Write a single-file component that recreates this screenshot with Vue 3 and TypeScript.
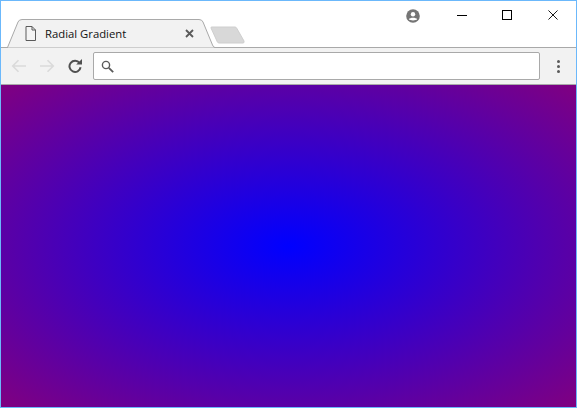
<script setup lang="ts">
const title: string = 'Radial Gradient'
</script>

<template>
  <div class="window">
    <header class="titlebar">
      <div class="tabs">
        <div class="tab">
          <svg class="tab-shape" width="207" height="29" viewBox="0 0 207 29">
            <path d="M0 28.5 H0.5 L11 3 Q12 0.5 15 0.5 H192 Q195 0.5 196 3 L205.5 26 Q206.5 28.5 208 28.5" fill="#f2f2f2" stroke="#a9a9a9" stroke-width="1" />
          </svg>
          <svg class="page-icon" width="12" height="15" viewBox="0 0 12 15">
            <path d="M1 0.5 H7 L10.5 4 V14.5 H1 Z M7 0.5 V4 H10.5" fill="#f4f4f4" stroke="#5a5a5a" stroke-width="1" />
          </svg>
          <span class="tab-title">{{ title }}</span>
          <svg class="tab-close" width="9" height="9" viewBox="0 0 9 9">
            <path d="M1 1 L8 8 M8 1 L1 8" stroke="#5a5a5a" stroke-width="1.8" />
          </svg>
        </div>
        <svg class="new-tab" width="35" height="18" viewBox="0 0 35 18">
          <path d="M1 2 Q0.5 1 2 1 H25 Q26 1 26.6 2 L34 15 Q34.6 17 33 17 H9 Q8 17 7.4 16 Z" fill="#d8d8d8" stroke="#cecece" stroke-width="1" />
        </svg>
      </div>
      <div class="captions">
        <svg class="profile" width="14" height="14" viewBox="0 0 14 14">
          <circle cx="7" cy="7" r="6.8" fill="#757575" />
          <circle cx="7" cy="5.2" r="2.2" fill="#fff" />
          <path d="M2.8 10.3 C4 8.3 10 8.3 11.2 10.3 C10 11.8 4 11.8 2.8 10.3 Z" fill="#fff" />
        </svg>
        <svg class="cap-min" width="10" height="10" viewBox="0 0 10 10">
          <path d="M0 5.5 H10" stroke="#000" stroke-width="1" />
        </svg>
        <svg class="cap-max" width="10" height="10" viewBox="0 0 10 10">
          <rect x="0.5" y="0.5" width="9" height="9" fill="none" stroke="#000" stroke-width="1" />
        </svg>
        <svg class="cap-close" width="10" height="10" viewBox="0 0 11 11">
          <path d="M0.5 0.5 L10.5 10.5 M10.5 0.5 L0.5 10.5" stroke="#000" stroke-width="1" />
        </svg>
      </div>
    </header>
    <nav class="toolbar">
      <svg class="nav-icon" width="16" height="14" viewBox="0 0 16 14">
        <path d="M15 7 H2 M7.5 1.2 L1.7 7 L7.5 12.8" fill="none" stroke="#dadada" stroke-width="1.6" />
      </svg>
      <svg class="nav-icon forward" width="16" height="14" viewBox="0 0 16 14">
        <path d="M1 7 H14 M8.5 1.2 L14.3 7 L8.5 12.8" fill="none" stroke="#dadada" stroke-width="1.6" />
      </svg>
      <svg class="reload" width="14" height="14" viewBox="0 0 14 14">
        <path d="M11.6 4 A5.6 5.6 0 1 0 12.6 8.3" fill="none" stroke="#505050" stroke-width="2" />
        <path d="M8.2 5.4 H14 V0 Z" fill="#505050" />
      </svg>
      <div class="omnibox">
        <svg width="13" height="13" viewBox="0 0 13 13">
          <circle cx="5" cy="5" r="3.6" fill="none" stroke="#5a5a5a" stroke-width="1.4" />
          <path d="M7.8 7.8 L12.2 12.2" stroke="#5a5a5a" stroke-width="1.8" />
        </svg>
      </div>
      <div class="menu">
        <span class="dot"></span>
        <span class="dot"></span>
        <span class="dot"></span>
      </div>
    </nav>
    <main class="viewport"></main>
  </div>
</template>

<style>
html, body { margin: 0; padding: 0; }
</style>

<style scoped>
.window {
  box-sizing: border-box;
  width: 577px;
  height: 408px;
  border: 1px solid #6bb8fb;
  display: flex;
  flex-direction: column;
  background: #fff;
  overflow: hidden;
}
.titlebar {
  height: 47px;
  flex: none;
  display: flex;
  justify-content: space-between;
  box-sizing: border-box;
  border-bottom: 1px solid #a9a9a9;
}
.tabs {
  display: flex;
  align-items: flex-start;
  padding: 18px 0 0 6px;
}
.tab {
  position: relative;
  width: 199px;
  height: 29px;
  display: flex;
  align-items: center;
  box-sizing: border-box;
  padding: 0 0 0 18px;
}
.tab-shape {
  position: absolute;
  left: 0;
  top: 0;
  overflow: visible;
}
.page-icon, .tab-title, .tab-close { position: relative; }
.tab-title {
  margin-left: 8px;
  font: 11.3px/16px "Open Sans", "Noto Sans", sans-serif;
  color: #111;
  width: 140px;
  white-space: nowrap;
}
.new-tab {
  margin: 7px 0 0 4px;
  flex: none;
}
.captions {
  display: flex;
  align-items: flex-start;
  padding: 9px 18px 0 0;
}
.profile { margin: -1px 37px 0 0; }
.cap-min { margin: 0 35px 0 0; }
.cap-max { margin: 0 36px 0 0; }
.toolbar {
  height: 37px;
  flex: none;
  box-sizing: border-box;
  background: #f2f2f2;
  border-bottom: 1px solid #a9a9a9;
  display: flex;
  align-items: center;
  padding: 0 16px 0 10px;
}
.forward { margin-left: 12px; }
.reload { margin-left: 13px; }
.omnibox {
  flex: 1;
  height: 28px;
  margin-left: 11px;
  box-sizing: border-box;
  background: #fff;
  border: 1px solid #a9a9a9;
  border-radius: 2px;
  display: flex;
  align-items: center;
  padding-left: 7px;
}
.menu {
  margin-left: 17px;
  display: flex;
  flex-direction: column;
  gap: 2px;
  width: 3px;
}
.dot {
  width: 3px;
  height: 3px;
  background: #5a5a5a;
  border-radius: 50%;
}
.viewport {
  flex: 1;
  background: radial-gradient(#0000ff, #800080);
}
</style>
